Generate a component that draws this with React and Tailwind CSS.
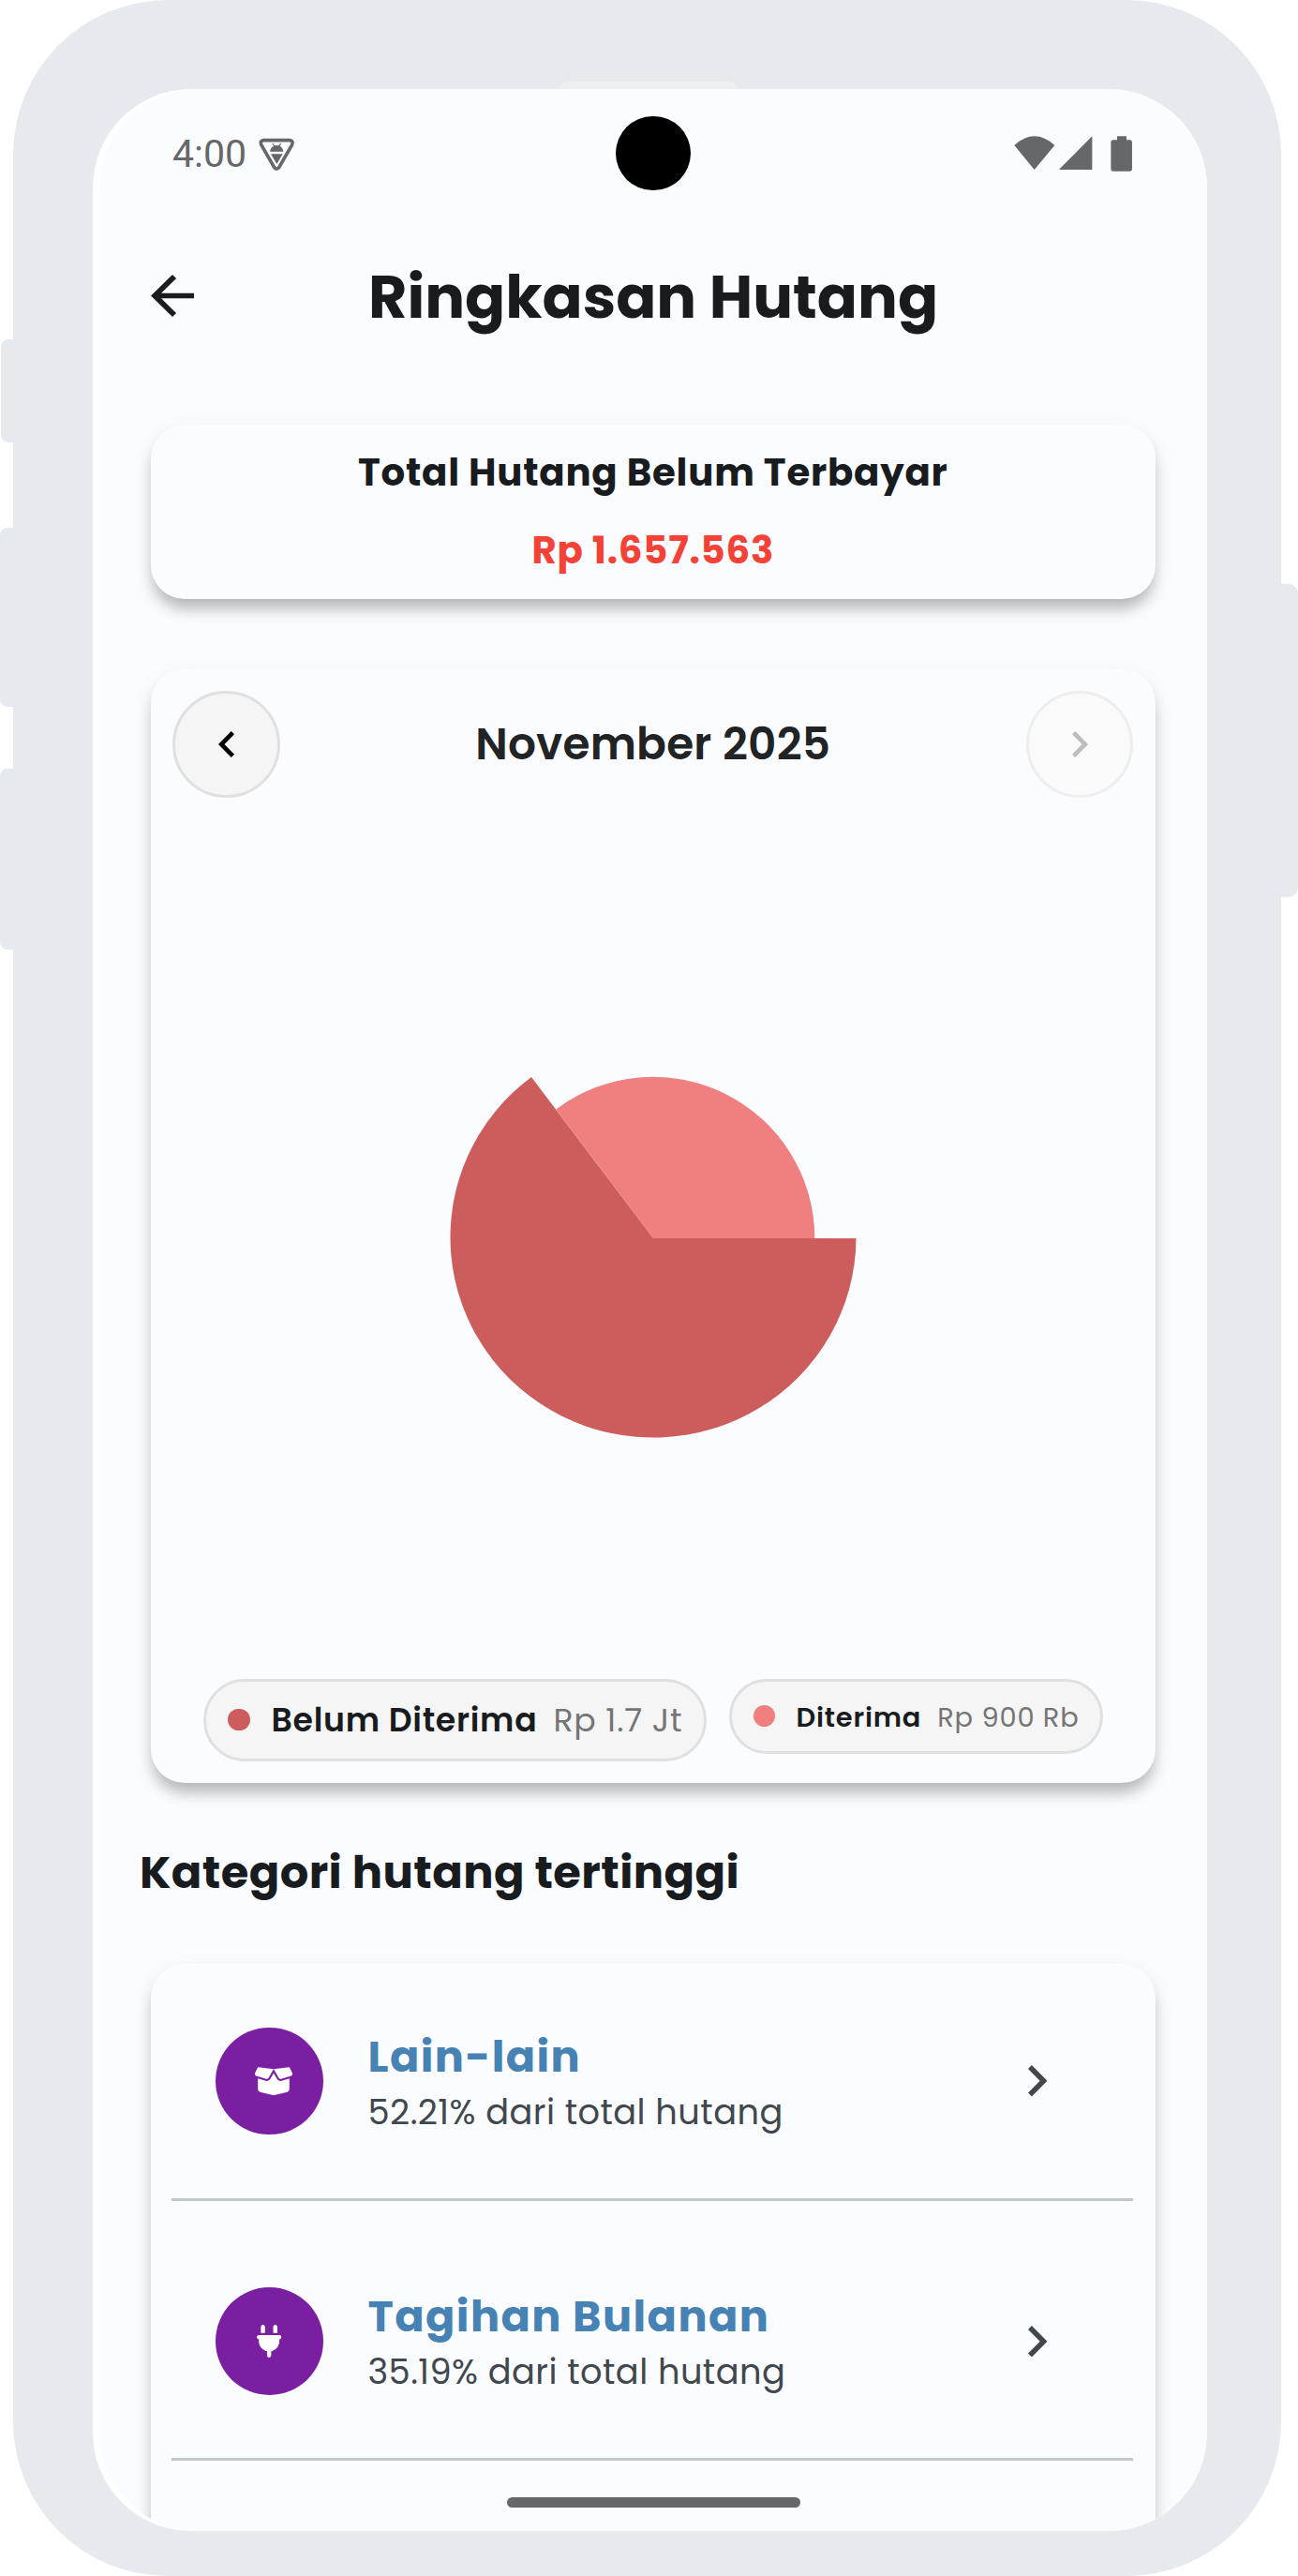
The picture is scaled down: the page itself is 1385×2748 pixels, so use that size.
import React from 'react';
import { FaBoxOpen, FaPlug } from 'react-icons/fa6';

const CARD =
  'bg-[#fbfcff] shadow-[0_13px_15px_-3px_rgba(0,0,0,0.22),0_8px_22px_rgba(0,0,0,0.09)]';

const categories = [
  { name: 'Lain-lain', share: '52.21% dari total hutang', icon: 'box' },
  { name: 'Tagihan Bulanan', share: '35.19% dari total hutang', icon: 'plug' },
];

function VpnIcon() {
  return (
    <svg viewBox="316 50 122 112" className="h-[37.3px] w-[40.7px]">
      <path
        d="M335 61H418Q431 62 426 75L384 148Q376 157 369 148L327 75Q322 62 335 61Z"
        fill="none"
        stroke="#666769"
        strokeWidth="11"
        strokeLinejoin="round"
      />
      <path d="M355 97Q357 84 367 80L362 72L365 71L370 78Q377 76 383 78L388 71L391 72L387 80Q396 84 398 97Z" fill="#666769" />
      <path d="M358 105H396L377 137Z" fill="#666769" />
    </svg>
  );
}

function WifiIcon() {
  return (
    <svg viewBox="38 44 131 110" className="h-[36.7px] w-[43.7px]">
      <path d="M39 74Q103 16 168 74L103 152Z" fill="#666769" />
    </svg>
  );
}

function SignalIcon() {
  return (
    <svg viewBox="178 44 110 110" className="h-[36.7px] w-[36.7px]">
      <path d="M179 153.500L287 45V153.500Z" fill="#666769" />
    </svg>
  );
}

function BatteryIcon() {
  return (
    <svg viewBox="347 44 70 114" className="h-[38px] w-[23.300px]">
      <path d="M368 45H398V57H409Q416 57 416 64V149Q416 157 408 157H356Q348 157 348 149V64Q348 57 355 57H368Z" fill="#666769" />
    </svg>
  );
}

function Chevron({ left, className }) {
  return left ? (
    <svg viewBox="8 6 7.41 12" preserveAspectRatio="none" className={className} fill="currentColor">
      <path d="M15.41 7.41 14 6l-6 6 6 6 1.41-1.41L10.83 12z" />
    </svg>
  ) : (
    <svg viewBox="8.59 6 7.41 12" preserveAspectRatio="none" className={className} fill="currentColor">
      <path d="M10 6 8.590 7.410 13.170 12l-4.580 4.590L10 18l6-6z" />
    </svg>
  );
}

function StatusBar() {
  return (
    <div className="relative flex h-[136px] items-center justify-between pr-[79.500px] pl-[78px]">
      <div className="flex items-center pt-[1px]">
        <span className="w-[91px] font-[Roboto,sans-serif] text-[41px] leading-[48px] text-[#666769]">4:00</span>
        <div className="pt-[3px]">
          <VpnIcon />
        </div>
      </div>
      <div className="absolute top-[28.500px] left-[551px] size-[79.500px] rounded-full bg-black" />
      <div className="flex items-start pt-[1px]">
        <WifiIcon />
        <div className="ml-[3px]">
          <SignalIcon />
        </div>
        <div className="ml-[19.500px]">
          <BatteryIcon />
        </div>
      </div>
    </div>
  );
}

function AppBar() {
  return (
    <div className="flex h-[169px] items-center pr-[55px] pl-[55px]">
      <svg viewBox="4 4 16 16" preserveAspectRatio="none" className="h-[45px] w-[46px]" fill="#1a1d20">
        <path d="M20 11H7.830l5.590-5.590L12 4l-8 8 8 8 1.410-1.410L7.830 13H20v-2z" />
      </svg>
      <h1 className="mt-[2px] flex-1 text-center text-[63.600px] leading-[90px] font-bold text-[#191c1f]">
        Ringkasan Hutang
      </h1>
      <div className="w-[46px]" />
    </div>
  );
}

function TotalCard() {
  return (
    <section className={`mr-[55px] ml-[54.500px] flex h-[186px] flex-col items-center gap-[23px] rounded-[36px] pt-[21px] ${CARD}`}>
      <h2 className="text-[40.300px] leading-[60px] font-bold tracking-[0.750px] text-[#191c1f]">
        Total Hutang Belum Terbayar
      </h2>
      <p className="text-[40.300px] leading-[60px] font-bold tracking-[0.750px] text-[#f44336]">Rp 1.657.563</p>
    </section>
  );
}

function PieChart() {
  return (
    <svg viewBox="0 0 434 387" className="h-[387px] w-[434px]">
      <path d="M217 173H389.300A172.300 172 0 0 0 113.300 35.400Z" fill="#f08080" />
      <path d="M217 173L87 1A216.500 213.700 0 1 0 433.500 173Z" fill="#cd5c5c" />
    </svg>
  );
}

function ChartCard() {
  return (
    <section className={`mt-[74.500px] mr-[55px] ml-[54.500px] flex h-[1188.500px] flex-col rounded-[36px] pt-[23px] ${CARD}`}>
      <div className="flex items-center justify-between px-[23.500px]">
        <button className="flex size-[114.500px] items-center justify-center rounded-full border-[3px] border-[#e0e0e0] bg-[#f5f5f5] text-black">
          <Chevron left className="h-[28px] w-[17px]" />
        </button>
        <h2 className="text-[47px] leading-[70px] font-semibold tracking-[0.200px] text-[#212324]">November 2025</h2>
        <button className="flex size-[114.500px] items-center justify-center rounded-full border-[3px] border-[#eeeeee] bg-[#fafafa] text-[#bdbdbd]">
          <Chevron className="h-[28px] w-[17px]" />
        </button>
      </div>
      <div className="flex flex-1 justify-center pt-[297px]">
        <PieChart />
      </div>
      <div className="flex h-[111.500px] items-start justify-center gap-[23.500px]">
        <div className="flex h-[88px] w-[537px] items-center rounded-full border-[3px] border-[#e0e0e0] bg-[#f5f5f5] pl-[23px] text-[34.700px] leading-[50px] tracking-[0.720px] whitespace-nowrap">
          <span className="size-[23.500px] rounded-full bg-[#cd5c5c]" />
          <span className="ml-[23px] pt-px font-semibold text-[#191c1f]">Belum Diterima</span>
          <span className="ml-[17px] pt-px text-[#757575]">Rp 1.7 Jt</span>
        </div>
        <div className="flex h-[80px] w-[399px] items-center rounded-full border-[3px] border-[#e0e0e0] bg-[#f5f5f5] pl-[23px] text-[28.900px] leading-[44px] tracking-[0.800px] whitespace-nowrap">
          <span className="size-[23.500px] rounded-full bg-[#f08080]" />
          <span className="ml-[22.500px] pt-[2px] font-semibold text-[#191c1f]">Diterima</span>
          <span className="ml-[17px] pt-[2px] text-[#757575]">Rp 900 Rb</span>
        </div>
      </div>
    </section>
  );
}

function CategoryRow({ item, first }) {
  return (
    <>
      <div className={`flex items-center pr-[116px] pl-[69.500px] ${first ? 'h-[250px]' : 'h-[274px] pt-[25px]'}`}>
        <div className="flex size-[114.500px] items-center justify-center rounded-full bg-[#7b1fa2] text-white">
          {item.icon === 'box' ? (
            <FaBoxOpen className="ml-[9px] h-[34.500px] w-[42px]" preserveAspectRatio="none" />
          ) : (
            <FaPlug className="h-[35px] w-[26.300px]" />
          )}
        </div>
        <div className="ml-[48px] flex-1 pt-[7px]">
          <h3 className="text-[46.200px] leading-[58px] font-bold tracking-[1.440px] text-[#4682b4]">{item.name}</h3>
          <p className="text-[36.800px] leading-[60px] tracking-[0.430px] text-[#41484d]">{item.share}</p>
        </div>
        <Chevron className="h-[33.500px] w-[20.500px] text-[#41484d]" />
      </div>
      <div className="mr-[24px] ml-[22.500px] h-[3px] bg-[#c0c7cd]" />
    </>
  );
}

export default function App() {
  return (
    <div className="relative h-[2748px] w-[1385px] overflow-hidden bg-white font-[Poppins,Inter,sans-serif]">
      <div className="absolute top-[362px] left-[1px] h-[110px] w-[40px] rounded-[8px] bg-[#e6eaee]" />
      <div className="absolute top-[563px] left-0 h-[191px] w-[40px] rounded-[8px] bg-[#e6eaee]" />
      <div className="absolute top-[820px] left-0 h-[193px] w-[40px] rounded-[8px] bg-[#e6eaee]" />
      <div className="absolute top-[623px] right-0 h-[333.500px] w-[40px] rounded-[10px] bg-[#e6eaee]" />
      <div className="relative ml-[13.500px] h-[2748px] w-[1353px] rounded-[165px] bg-[#e6eaee] pt-[95px] pl-[85.500px]">
        <div className="absolute top-[87px] left-[584.500px] h-[20px] w-[188px] rounded-t-[8px] bg-[#efefef]" />
        <div className="relative h-[2605px] w-[1189px] overflow-hidden rounded-[105px] bg-white pl-[7px]">
          <main className="relative h-[2605px] w-[1182px] overflow-hidden rounded-[105px] bg-[#fbfcff]">
            <StatusBar />
            <AppBar />
            <div className="pt-[53px]">
              <TotalCard />
              <ChartCard />
              <h2 className="mt-[61px] ml-[43px] text-[48px] leading-[70px] font-bold tracking-[0.400px] text-[#191c1f]">
                Kategori hutang tertinggi
              </h2>
              <section className={`mt-[62px] mr-[55px] ml-[54.500px] h-[800px] rounded-[36px] ${CARD}`}>
                {categories.map((item, i) => (
                  <CategoryRow key={item.name} item={item} first={i === 0} />
                ))}
              </section>
            </div>
            <div className="absolute bottom-[25px] left-[434.500px] h-[11px] w-[313px] rounded-full bg-[#666769]" />
          </main>
        </div>
      </div>
    </div>
  );
}
